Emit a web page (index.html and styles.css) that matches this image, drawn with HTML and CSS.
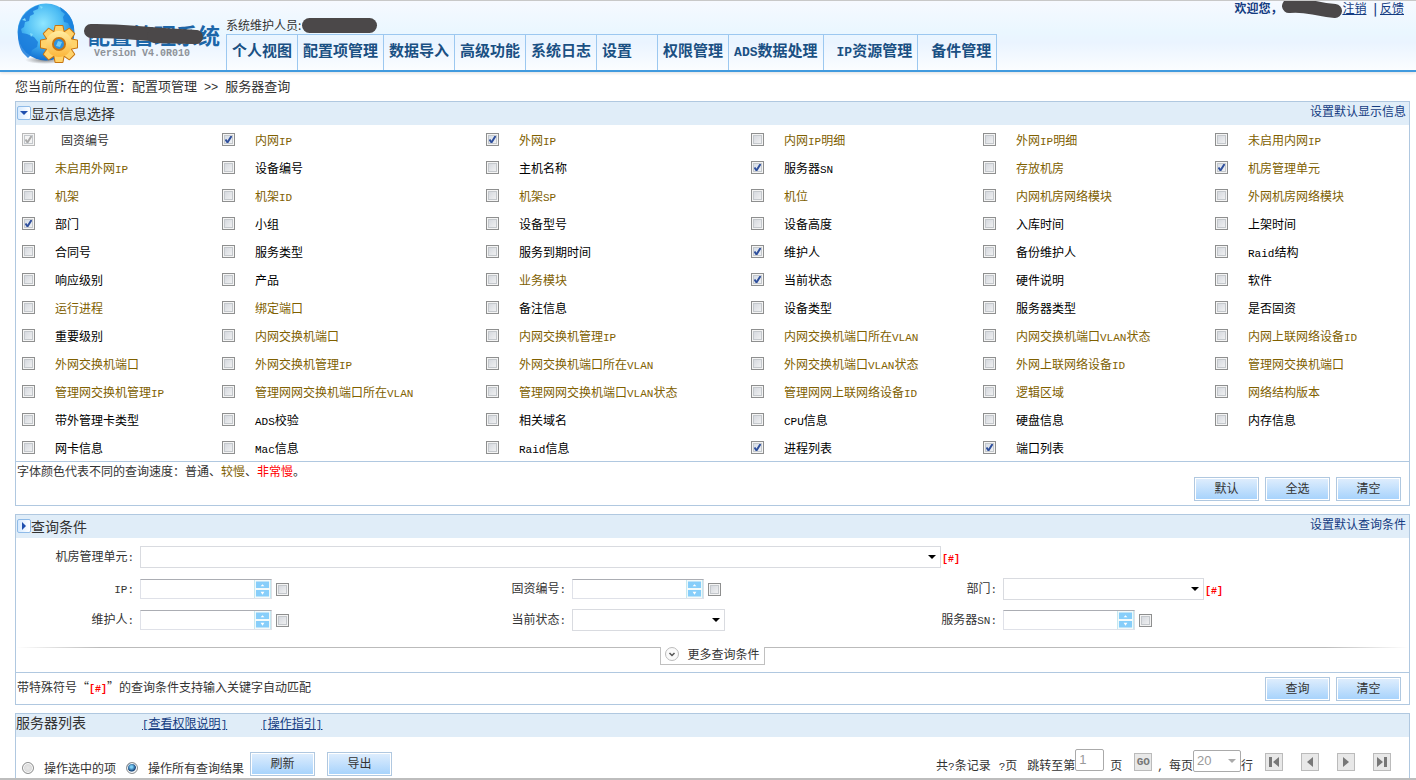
FILE: index.html
```html
<!DOCTYPE html>
<html lang="zh-CN">
<head>
<meta charset="utf-8">
<title>配置管理系统 - 服务器查询</title>
<link rel="stylesheet" href="styles.css">
</head>
<body>
<div class="page">
<header class="top">
  <svg class="logo" viewBox="0 0 62 62" aria-hidden="true">
    <defs>
      <radialGradient id="sea" cx="45%" cy="35%" r="65%"><stop offset="0" stop-color="#8fe6ff"/><stop offset=".5" stop-color="#4cbcf4"/><stop offset="1" stop-color="#0f6ed2"/></radialGradient>
      <linearGradient id="gold" x1="0" y1="0" x2="0" y2="1"><stop offset="0" stop-color="#ffeca0"/><stop offset="1" stop-color="#fcb63a"/></linearGradient>
      <radialGradient id="shade"><stop offset="0" stop-color="#555" stop-opacity=".7"/><stop offset="1" stop-color="#555" stop-opacity="0"/></radialGradient>
      <g id="teeth"><path d="M-3.500-18h7l1.500 8h-10zM-3.500 18h7l1.500-8h-10z"/></g>
    </defs>
    <ellipse cx="28" cy="57" rx="20" ry="4" fill="url(#shade)"/>
    <circle cx="29" cy="29" r="28.500" fill="url(#sea)"/>
    <path d="M2 22C5 12 12 5 22 2l-1 4-5 2 1 3-4 2-1 5-4 1-1 5-3 2 1 4 5 1 7 3 4 5-1 5-5 3-2 6-2 2-5-5C1 43 0 32 2 22z" fill="#1b7cdc" opacity=".85"/>
    <path d="M43 4c5 3 9 7 12 13l2 8-3 1-3-6-4-1-1-5 2-3-4-3z" fill="#1681dd" opacity=".8"/>
    <path d="M5 17l3-2 1 3zM23 3l3 1-2 2zM36 23l3-1 1 2-3 1zM13 30l3 1-2 3z" fill="#82dcfb"/>
    <g transform="translate(42 41)">
      <g fill="#ffd36b" stroke="#c77410" stroke-width="2" stroke-linejoin="round">
        <use href="#teeth"/><use href="#teeth" transform="rotate(45)"/><use href="#teeth" transform="rotate(90)"/><use href="#teeth" transform="rotate(135)"/>
        <circle r="13"/>
      </g>
      <g fill="#ffd36b">
        <use href="#teeth"/><use href="#teeth" transform="rotate(45)"/><use href="#teeth" transform="rotate(90)"/><use href="#teeth" transform="rotate(135)"/>
      </g>
      <circle r="13" fill="url(#gold)"/>
      <circle r="6" fill="#2d91df" stroke="#c77410" stroke-width="2"/>
      <path d="M-3 2l2-5 4 1-2 5z" fill="#74cdf5"/>
    </g>
  </svg>
  <div class="brand">
    <h1>配置管理系统</h1>
    <p class="version">Version V4.0R010</p>
    <svg class="mask" viewBox="0 0 120 22" aria-hidden="true"><path d="M7 8C35 7 62 12 112 14" fill="none" stroke="#4b4849" stroke-width="14" stroke-linecap="round"/><path d="M70 13L111 14" stroke="#4b4849" stroke-width="14" stroke-linecap="round"/></svg>
  </div>
  <div class="menu">
    <p class="role">系统维护人员:<span class="blot"></span></p>
    <nav>
      <a href="#">个人视图</a><a href="#">配置项管理</a><a href="#">数据导入</a><a href="#">高级功能</a><a href="#">系统日志</a><a href="#" class="short">设置</a><a href="#">权限管理</a><a href="#"><span class="en">ADS</span>数据处理</a><a href="#" class="inset"><span class="en">IP</span>资源管理</a><a href="#" class="inset">备件管理</a>
    </nav>
  </div>
  <div class="account">
    <b>欢迎您，</b>
    <svg class="name" viewBox="0 0 60 19" aria-hidden="true"><path d="M7 6C25 4 30 9 53 11" fill="none" stroke="#4b4849" stroke-width="14" stroke-linecap="round"/></svg>
    <a href="#">注销</a><b class="bar">|</b><a href="#">反馈</a>
  </div>
</header>

<main>
<p class="crumb">您当前所在的位置：配置项管理 <span class="sep">&gt;&gt;</span> 服务器查询</p>

<section class="panel">
  <div class="head">
    <button class="toggle" type="button" aria-label="收起"><svg viewBox="0 0 8 8"><path d="M0 2h8L4 6z"/></svg></button>
    <h2>显示信息选择</h2>
    <a class="preset" href="#">设置默认显示信息</a>
  </div>
  <div class="fields">
    <label class="first"><input type="checkbox" checked disabled><span>固资编号</span></label>
    <label class="slow"><input type="checkbox" checked><span>内网<i>IP</i></span></label>
    <label class="slow"><input type="checkbox" checked><span>外网<i>IP</i></span></label>
    <label class="slow"><input type="checkbox"><span>内网<i>IP</i>明细</span></label>
    <label class="slow"><input type="checkbox"><span>外网<i>IP</i>明细</span></label>
    <label class="slow"><input type="checkbox"><span>未启用内网<i>IP</i></span></label>

    <label class="slow"><input type="checkbox"><span>未启用外网<i>IP</i></span></label>
    <label><input type="checkbox"><span>设备编号</span></label>
    <label><input type="checkbox"><span>主机名称</span></label>
    <label><input type="checkbox" checked><span>服务器<i>SN</i></span></label>
    <label class="slow"><input type="checkbox"><span>存放机房</span></label>
    <label class="slow"><input type="checkbox" checked><span>机房管理单元</span></label>

    <label class="slow"><input type="checkbox"><span>机架</span></label>
    <label class="slow"><input type="checkbox"><span>机架<i>ID</i></span></label>
    <label class="slow"><input type="checkbox"><span>机架<i>SP</i></span></label>
    <label class="slow"><input type="checkbox"><span>机位</span></label>
    <label class="slow"><input type="checkbox"><span>内网机房网络模块</span></label>
    <label class="slow"><input type="checkbox"><span>外网机房网络模块</span></label>

    <label><input type="checkbox" checked><span>部门</span></label>
    <label><input type="checkbox"><span>小组</span></label>
    <label><input type="checkbox"><span>设备型号</span></label>
    <label><input type="checkbox"><span>设备高度</span></label>
    <label><input type="checkbox"><span>入库时间</span></label>
    <label><input type="checkbox"><span>上架时间</span></label>

    <label><input type="checkbox"><span>合同号</span></label>
    <label><input type="checkbox"><span>服务类型</span></label>
    <label><input type="checkbox"><span>服务到期时间</span></label>
    <label><input type="checkbox" checked><span>维护人</span></label>
    <label><input type="checkbox"><span>备份维护人</span></label>
    <label><input type="checkbox"><span><i>Raid</i>结构</span></label>

    <label><input type="checkbox"><span>响应级别</span></label>
    <label><input type="checkbox"><span>产品</span></label>
    <label class="slow"><input type="checkbox"><span>业务模块</span></label>
    <label><input type="checkbox" checked><span>当前状态</span></label>
    <label><input type="checkbox"><span>硬件说明</span></label>
    <label><input type="checkbox"><span>软件</span></label>

    <label class="slow"><input type="checkbox"><span>运行进程</span></label>
    <label class="slow"><input type="checkbox"><span>绑定端口</span></label>
    <label><input type="checkbox"><span>备注信息</span></label>
    <label><input type="checkbox"><span>设备类型</span></label>
    <label><input type="checkbox"><span>服务器类型</span></label>
    <label><input type="checkbox"><span>是否固资</span></label>

    <label><input type="checkbox"><span>重要级别</span></label>
    <label class="slow"><input type="checkbox"><span>内网交换机端口</span></label>
    <label class="slow"><input type="checkbox"><span>内网交换机管理<i>IP</i></span></label>
    <label class="slow"><input type="checkbox"><span>内网交换机端口所在<i>VLAN</i></span></label>
    <label class="slow"><input type="checkbox"><span>内网交换机端口<i>VLAN</i>状态</span></label>
    <label class="slow"><input type="checkbox"><span>内网上联网络设备<i>ID</i></span></label>

    <label class="slow"><input type="checkbox"><span>外网交换机端口</span></label>
    <label class="slow"><input type="checkbox"><span>外网交换机管理<i>IP</i></span></label>
    <label class="slow"><input type="checkbox"><span>外网交换机端口所在<i>VLAN</i></span></label>
    <label class="slow"><input type="checkbox"><span>外网交换机端口<i>VLAN</i>状态</span></label>
    <label class="slow"><input type="checkbox"><span>外网上联网络设备<i>ID</i></span></label>
    <label class="slow"><input type="checkbox"><span>管理网交换机端口</span></label>

    <label class="slow"><input type="checkbox"><span>管理网交换机管理<i>IP</i></span></label>
    <label class="slow"><input type="checkbox"><span>管理网网交换机端口所在<i>VLAN</i></span></label>
    <label class="slow"><input type="checkbox"><span>管理网网交换机端口<i>VLAN</i>状态</span></label>
    <label class="slow"><input type="checkbox"><span>管理网网上联网络设备<i>ID</i></span></label>
    <label class="slow"><input type="checkbox"><span>逻辑区域</span></label>
    <label class="slow"><input type="checkbox"><span>网络结构版本</span></label>

    <label><input type="checkbox"><span>带外管理卡类型</span></label>
    <label><input type="checkbox"><span><i>ADS</i>校验</span></label>
    <label><input type="checkbox"><span>相关域名</span></label>
    <label><input type="checkbox"><span><i>CPU</i>信息</span></label>
    <label><input type="checkbox"><span>硬盘信息</span></label>
    <label><input type="checkbox"><span>内存信息</span></label>

    <label><input type="checkbox"><span>网卡信息</span></label>
    <label><input type="checkbox"><span><i>Mac</i>信息</span></label>
    <label><input type="checkbox"><span><i>Raid</i>信息</span></label>
    <label><input type="checkbox" checked><span>进程列表</span></label>
    <label><input type="checkbox" checked><span>端口列表</span></label>
  </div>
  <div class="foot legend">
    <p>字体颜色代表不同的查询速度：普通、<span class="slow">较慢</span>、<span class="red">非常慢</span>。</p>
    <div class="actions"><button class="btn" type="button">默认</button><button class="btn" type="button">全选</button><button class="btn" type="button">清空</button></div>
  </div>
</section>

<section class="panel">
  <div class="head">
    <button class="toggle" type="button" aria-label="展开"><svg viewBox="0 0 8 8"><path d="M2 0v8l4-4z"/></svg></button>
    <h2>查询条件</h2>
    <a class="preset" href="#">设置默认查询条件</a>
  </div>
  <form class="query">
    <div class="field whole"><label for="unit">机房管理单元<i>:</i></label><select id="unit" class="wide"><option></option></select><b class="hash">[#]</b></div>
    <div class="field"><label for="ip"><i>IP:</i></label><span class="spin"><input id="ip" type="text"><button type="button" aria-label="展开输入框"><svg viewBox="0 0 16 18"><use href="#arrows"/></svg></button></span><input type="checkbox" aria-label="IP"></div>
    <div class="field"><label for="asset">固资编号<i>:</i></label><span class="spin"><input id="asset" type="text"><button type="button" aria-label="展开输入框"><svg viewBox="0 0 16 18"><use href="#arrows"/></svg></button></span><input type="checkbox" aria-label="固资编号"></div>
    <div class="field"><label for="dept">部门<i>:</i></label><select id="dept" class="medium"><option></option></select><b class="hash">[#]</b></div>
    <div class="field"><label for="owner">维护人<i>:</i></label><span class="spin"><input id="owner" type="text"><button type="button" aria-label="展开输入框"><svg viewBox="0 0 16 18"><use href="#arrows"/></svg></button></span><input type="checkbox" aria-label="维护人"></div>
    <div class="field"><label for="state">当前状态<i>:</i></label><select id="state" class="narrow"><option></option></select></div>
    <div class="field"><label for="sn">服务器<i>SN:</i></label><span class="spin"><input id="sn" type="text"><button type="button" aria-label="展开输入框"><svg viewBox="0 0 16 18"><defs><g id="arrows"><path fill="#87cefa" d="M1 1h14v7H1zM1 10h14v7H1z"/><path fill="#fff" d="M8 4l2 2H6zM6 12h4l-2 3z"/></g></defs><use href="#arrows"/></svg></button></span><input type="checkbox" aria-label="服务器SN"></div>
  </form>
  <div class="more"><button type="button"><svg viewBox="0 0 14 14" aria-hidden="true"><circle cx="7" cy="7" r="6.500" fill="#fafafa" stroke="#bbb"/><path d="M4.500 6l2.500 2.500L9.500 6" fill="none" stroke="#555" stroke-width="1.500"/></svg>更多查询条件</button></div>
  <div class="foot tip">
    <p>带特殊符号“<b class="hash">[#]</b>”的查询条件支持输入关键字自动匹配</p>
    <div class="actions"><button class="btn" type="button">查询</button><button class="btn" type="button">清空</button></div>
  </div>
</section>

<section class="panel list">
  <div class="head">
    <h2>服务器列表</h2>
    <a href="#"><i>[</i>查看权限说明<i>]</i></a>
    <a href="#"><i>[</i>操作指引<i>]</i></a>
  </div>
  <div class="tools">
    <label><input type="radio" name="scope">操作选中的项</label>
    <label><input type="radio" name="scope" checked>操作所有查询结果</label>
    <button class="btn" type="button">刷新</button>
    <button class="btn export" type="button">导出</button>
    <div class="pager">
      <span class="count">共<i>?</i>条记录</span><span class="pages"><i>?</i>页</span>
      <label for="goto">跳转至第</label><input id="goto" type="text" value="1" disabled><span class="unit">页</span>
      <button class="step" type="button">GO</button><span class="comma"><i>,</i></span>
      <label for="size">每页</label><select id="size" disabled><option>20</option></select><span>行</span>
      <div class="steps">
        <button class="step" type="button" aria-label="首页"><svg viewBox="0 0 16 16"><path d="M3 3h3v10H3zM13 3v10L7 8z"/></svg></button>
        <button class="step" type="button" aria-label="上一页"><svg viewBox="0 0 16 16"><path d="M11 3v10L5 8z"/></svg></button>
        <button class="step" type="button" aria-label="下一页"><svg viewBox="0 0 16 16"><path d="M5 3v10l6-5z"/></svg></button>
        <button class="step" type="button" aria-label="末页"><svg viewBox="0 0 16 16"><path d="M3 3v10l6-5zM10 3h3v10h-3z"/></svg></button>
      </div>
    </div>
  </div>
</section>
</main>
</div>
</body>
</html>
```
FILE: styles.css
```css
* { box-sizing: border-box; }
body, h1, h2, p { margin: 0; }
body, button, input, select {
  font-family: "Noto Sans CJK SC", sans-serif;
  font-size: 12px;
  line-height: 16px;
  color: #333;
}
a { color: #143c82; }
i, .en { font-family: "Liberation Mono", monospace; font-size: 11px; font-style: normal; line-height: 1; }
button, input, select { margin: 0; padding: 0; }

.page {
  display: flex;
  flex-direction: column;
  height: 100vh;
  overflow: hidden;
  border-top: 1px solid #c8c8c8;
  border-bottom: 2px solid #bdbdbd;
  background: #fff;
}

/* top bar */
.top {
  display: flex;
  flex: none;
  height: 71px;
  padding-left: 17px;
  border-bottom: 2px solid #419ade;
  background: linear-gradient(#f6f9ff, #eaf7ff 45%, #eaf4ff 60%, #fbfdff);
  box-shadow: 0 1px 3px #ddd;
}
.logo { width: 62px; height: 62px; margin-top: 2px; }
.brand { position: relative; width: 147px; padding: 21px 0 0 9px; }
.brand h1 { font-size: 22px; line-height: 24px; color: #1c66a8; white-space: nowrap; }
.version { padding: 3px 0 0 6px; font: bold 10px/10px "Liberation Mono", monospace; color: #8d9298; }
.mask { position: absolute; left: 5px; top: 22px; width: 120px; height: 22px; }
.menu { display: flex; flex-direction: column; justify-content: space-between; }
.role { display: flex; align-items: center; padding-top: 16px; }
.blot { width: 75px; height: 15px; margin-left: 1px; border-radius: 8px; background: #4b4849; }
nav { display: flex; height: 36px; border: 1px solid #9cc8f0; border-bottom: 0; }
nav a {
  padding: 5px 5px 0;
  font-size: 15px;
  font-weight: bold;
  line-height: 20px;
  color: #1a5083;
  text-decoration: none;
  white-space: nowrap;
}
nav a + a { border-left: 1px solid #9cc8f0; }
nav .en { font-size: 13px; }
nav .short { padding-right: 25px; }
nav .inset { padding-left: 13px; }
.account { display: flex; align-items: flex-start; margin-left: auto; padding-right: 12px; line-height: 14px; color: #143c82; white-space: nowrap; }
.account b { font-size: 12px; }
.account .bar { padding: 0 3px 0 7px; }
.name { width: 60px; height: 19px; margin-top: -1px; }

main { padding: 0 6px 0 15px; }
.crumb { padding: 5px 0 6px; font-size: 13px; line-height: 18px; white-space: pre; }
.sep { padding: 0 4px; font-family: "Liberation Mono", monospace; font-size: 12px; line-height: 1; }

/* panels */
.panel { margin-bottom: 8px; border: 1px solid #b0c8e0; }
.head { display: flex; align-items: flex-start; height: 23px; background: #e0edf8; }
.head h2 { font-size: 14px; font-weight: normal; line-height: 22px; }
.preset { margin-left: auto; padding-right: 3px; line-height: 17px; text-decoration: none; }
.toggle {
  display: flex;
  align-items: center;
  justify-content: center;
  width: 14px;
  height: 14px;
  margin: 4px 0 0 1px;
  border: 1px solid #8fbbe8;
  border-radius: 2px;
  background: linear-gradient(90deg, #d6eaff, #fff);
}
.toggle svg { width: 8px; height: 8px; fill: #1f4fae; }

input[type="checkbox"] {
  appearance: none;
  flex: none;
  width: 13px;
  height: 13px;
  border: 1px solid #8e8f8f;
  background: linear-gradient(135deg, #cfd3da, #f6f6f6);
  box-shadow: inset 0 0 0 1px #f4f4f4, inset 0 0 0 2px #c4c8cc;
}
input[type="checkbox"]:checked {
  background: url("data:image/svg+xml,%3Csvg xmlns='http://www.w3.org/2000/svg' viewBox='0 0 11 11'%3E%3Cpath d='M2.500 5.500l2 3L8.500 2' fill='none' stroke='%232f4f9c' stroke-width='2'/%3E%3C/svg%3E"), linear-gradient(135deg, #cfd8e4, #f6f6f6);
}
input[type="checkbox"]:disabled {
  border-color: #b8b8b8;
  background: url("data:image/svg+xml,%3Csvg xmlns='http://www.w3.org/2000/svg' viewBox='0 0 11 11'%3E%3Cpath d='M2.500 5.500l2 3L8.500 2' fill='none' stroke='%23aaa' stroke-width='2'/%3E%3C/svg%3E"), #f4f4f4;
}

.fields {
  display: grid;
  grid-template-columns: 200fr 264fr 265fr 232fr 232fr 194fr;
  grid-auto-rows: 28px;
  padding-left: 6px;
}
.fields label { display: flex; align-items: flex-start; gap: 20px; padding-top: 7px; color: #000; white-space: nowrap; }
.fields label.first { gap: 26px; color: #333; }
.fields label.slow, .slow { color: #806000; }
.fields input { margin-top: 1px; }
.red, .hash { color: #f00; }
.hash { font-family: "Liberation Mono", monospace; font-size: 10px; }

.foot { display: flex; justify-content: space-between; padding-left: 1px; padding-right: 8px; border-top: 1px solid #b0c8e0; }
.legend { height: 44px; align-items: flex-start; }
.legend p { padding-top: 1px; }
.legend .actions { padding-top: 15px; }
.tip { height: 32px; align-items: center; }
.actions { display: flex; gap: 6px; }
.btn {
  width: 65px;
  height: 24px;
  padding-bottom: 2px;
  border: 1px solid #b0c8e0;
  background: linear-gradient(#e0eefd, #a5d2fc);
  box-shadow: inset 0 0 0 1px #fff;
  line-height: 20px;
}

/* query form */
.query {
  display: grid;
  grid-template-columns: 432fr 431fr 530fr;
  grid-template-rows: 32px 32px 30px;
  padding-top: 3px;
}
.field { display: flex; align-items: center; }
.field label { width: 124px; padding: 0 6px 2px 0; text-align: right; }
.whole { grid-column: 1 / -1; }
.field .hash { padding: 5px 0 0 1px; }
select {
  appearance: none;
  height: 22px;
  border: 1px solid #d9dbe0;
  border-radius: 0;
  background: #fff url("data:image/svg+xml,%3Csvg xmlns='http://www.w3.org/2000/svg' viewBox='0 0 8 4'%3E%3Cpath d='M0 0h8L4 4z'/%3E%3C/svg%3E") no-repeat right 4px center / 8px 4px;
}
.wide { flex: 0 1 801px; min-width: 0; }
.medium { width: 201px; }
.narrow { width: 153px; }
.spin {
  display: flex;
  width: 132px;
  height: 20px;
  margin-right: 4px;
  border: 1px solid #dfe1e8;
  border-top-color: #abadb3;
}
.spin input { flex: 1; min-width: 0; border: 0; }
.spin button { width: 17px; height: 18px; border: 1px solid #c5e8f0; border-width: 0 1px; background: #f4fbfb; }
.spin svg { display: block; width: 15px; height: 18px; }

.more {
  display: flex;
  justify-content: center;
  align-items: flex-start;
  height: 25px;
  margin-top: 12px;
  background: linear-gradient(90deg, #fff, #bbb 6%, #bbb 94%, #fff) top / 100% 1px no-repeat;
}
.more button {
  display: flex;
  align-items: center;
  gap: 8px;
  height: 18px;
  padding: 0 4px 4px;
  border: 1px solid #c0c0c0;
  border-top: 0;
  background: #fff;
  line-height: 14px;
}
.more svg { width: 14px; height: 14px; }

/* result list */
.list .head h2 { width: 126px; line-height: 16px; }
.list .head a { margin-right: 34px; line-height: 17px; white-space: nowrap; }
.tools { display: flex; align-items: center; height: 60px; padding: 0 18px 6px 6px; white-space: nowrap; }
.tools > label { display: flex; align-items: center; gap: 10px; padding-top: 8px; margin-right: 10px; }
.tools > label + label { margin-right: 6px; }
input[type="radio"] {
  appearance: none;
  width: 12px;
  height: 12px;
  border: 1px solid #8e8f8f;
  border-radius: 50%;
  background: radial-gradient(#e8e8e8, #d0d0d0);
  box-shadow: inset 0 0 0 1px #fff;
}
input[type="radio"]:checked { background: radial-gradient(circle at 45% 40%, #7cd0f8 0 1px, #16457c 4px, #cfd8e0 5px); }
.export { margin-left: 12px; }
.pager { display: flex; align-items: center; margin-left: auto; padding-bottom: 4px; }
.pager > span, .pager label { padding-top: 6px; }
.count { margin-right: 8px; }
.pages { margin-right: 10px; }
.pager input, .pager select {
  height: 22px;
  padding: 0 5px 2px 3px;
  border: 1px solid #aaa;
  border-radius: 2px;
  background-color: #fff;
  font-family: "Liberation Sans", sans-serif;
  font-size: 13px;
  color: #999;
  opacity: 1;
}
.pager input { width: 29px; margin-bottom: 4px; }
.pager select {
  width: 48px;
  margin-bottom: 2px;
  padding-bottom: 0;
  background-image: url("data:image/svg+xml,%3Csvg xmlns='http://www.w3.org/2000/svg' viewBox='0 0 8 4'%3E%3Cpath fill='%23aaa' d='M0 0h8L4 4z'/%3E%3C/svg%3E");
}
.unit { margin: 0 12px 0 6px; }
.comma { margin: 0 5px; }
.step {
  width: 18px;
  height: 18px;
  border: 1px solid #bbb;
  background: #e8e8e8;
  font: bold 11px/16px "Liberation Mono", monospace;
  color: #777;
}
.step svg { display: block; width: 16px; height: 16px; fill: #777; }
.steps { display: flex; gap: 18px; margin-left: 12px; }
```
